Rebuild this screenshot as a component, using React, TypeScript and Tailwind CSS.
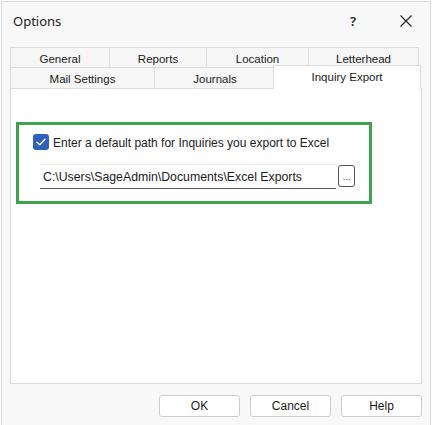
import React from "react";

const font = { fontFamily: '"Liberation Sans", Arial, sans-serif' };

type Tab = { label: string; w: string };

const topRow: Tab[] = [
  { label: "General", w: "w-[99px]" },
  { label: "Reports", w: "w-[97px]" },
  { label: "Location", w: "w-[102px]" },
  { label: "Letterhead", w: "w-[111px]" },
];

function CloseIcon() {
  return (
    <svg width="12" height="12" viewBox="0 0 12 12" className="block">
      <path d="M0.5 0.5 L11.5 11.5 M11.5 0.5 L0.5 11.5" stroke="#1f1f1f" strokeWidth="1.1" fill="none" />
    </svg>
  );
}

function CheckBox() {
  return (
    <span className="flex h-[16px] w-[16px] items-center justify-center rounded-[3px] bg-[#2f5fbf]">
      <svg width="10" height="8" viewBox="0 0 10 8">
        <path d="M1 4.2 L3.8 6.8 L9 1.2" stroke="#ffffff" strokeWidth="1.4" fill="none" strokeLinecap="round" strokeLinejoin="round" />
      </svg>
    </span>
  );
}

function DialogButton({ label }: { label: string }) {
  return (
    <button className="flex h-[22px] w-[81px] items-center justify-center rounded-[3px] border border-[#cdcdcd] bg-white text-[12px] leading-none text-[#1b1b1b]">
      {label}
    </button>
  );
}

export default function App() {
  return (
    <div className="h-[425px] w-[432px] bg-[#fbfbfb] px-px pt-px" style={font}>
      <div className="flex h-[424px] flex-col border-l border-r border-t border-[#dadada] bg-[#f8f8f8] text-[#1b1b1b]">
        {/* title bar */}
        <div className="flex h-[38px] items-center pl-[11px]">
          <span className="text-[13px] leading-none" style={{ fontFamily: '"Noto Sans", "Open Sans", sans-serif' }}>
            Options
          </span>
          <span className="ml-auto text-[13px] font-semibold leading-none text-[#222]" style={{ fontFamily: '"Noto Sans", sans-serif' }}>
            ?
          </span>
          <span className="ml-[44px] mr-[18px]">
            <CloseIcon />
          </span>
        </div>

        {/* tab strip */}
        <div className="ml-[8px] pt-[7px] text-[11.5px] leading-[16px]">
          <div className="flex h-[20px]">
            {topRow.map((t, i) => (
              <div
                key={t.label}
                className={`${t.w} flex h-full justify-center border-l border-t border-[#dcdcdc] bg-[#f6f6f6] pt-[3px] ${
                  i === topRow.length - 1 ? "border-r" : ""
                }`}
              >
                {t.label}
              </div>
            ))}
          </div>
          <div className="flex h-[21px] items-start">
            <div className="flex h-full w-[144px] justify-center border-l border-t border-[#dcdcdc] bg-[#f6f6f6] pt-[3px]">
              Mail Settings
            </div>
            <div className="flex h-full w-[121px] justify-center border-l border-t border-[#dcdcdc] bg-[#f6f6f6] pt-[3px]">
              Journals
            </div>
            <div className="relative z-10 -ml-[2px] -mt-[2px] flex h-[24px] w-[148px] justify-center border-l border-r border-t border-[#dcdcdc] bg-white pt-[3px]">
              Inquiry Export
            </div>
          </div>
        </div>

        {/* page */}
        <div className="ml-[8px] h-[296px] w-[412px] border border-[#dcdcdc] bg-white">
          <div className="ml-[5px] mt-[33px] h-[82px] w-[356px] border-[3px] border-[#3fa34d] pl-[14px] pt-[7px]">
            <label className="flex items-center gap-[4px] text-[12px] leading-[16px]">
              <CheckBox />
              <span className="pt-[3px]">Enter a default path for Inquiries you export to Excel</span>
            </label>
            <div className="ml-[7px] mt-[13px] flex items-start">
              <div className="flex h-[25px] w-[296px] items-center border-b border-t border-b-[#5a5a5a] border-t-[#ececec] pl-[3px] pt-px text-[12.3px]">
                C:\Users\SageAdmin\Documents\Excel Exports
              </div>
              <button className="ml-[2px] mt-px flex h-[22px] w-[17px] items-end justify-center rounded-[3px] border border-[#555] bg-white pb-[4px] text-[9px] leading-none text-[#333]">
                ...
              </button>
            </div>
          </div>
        </div>

        {/* buttons */}
        <div className="mt-[11px] flex w-[420px] justify-end gap-[10px]">
          <DialogButton label="OK" />
          <DialogButton label="Cancel" />
          <DialogButton label="Help" />
        </div>
      </div>
    </div>
  );
}
